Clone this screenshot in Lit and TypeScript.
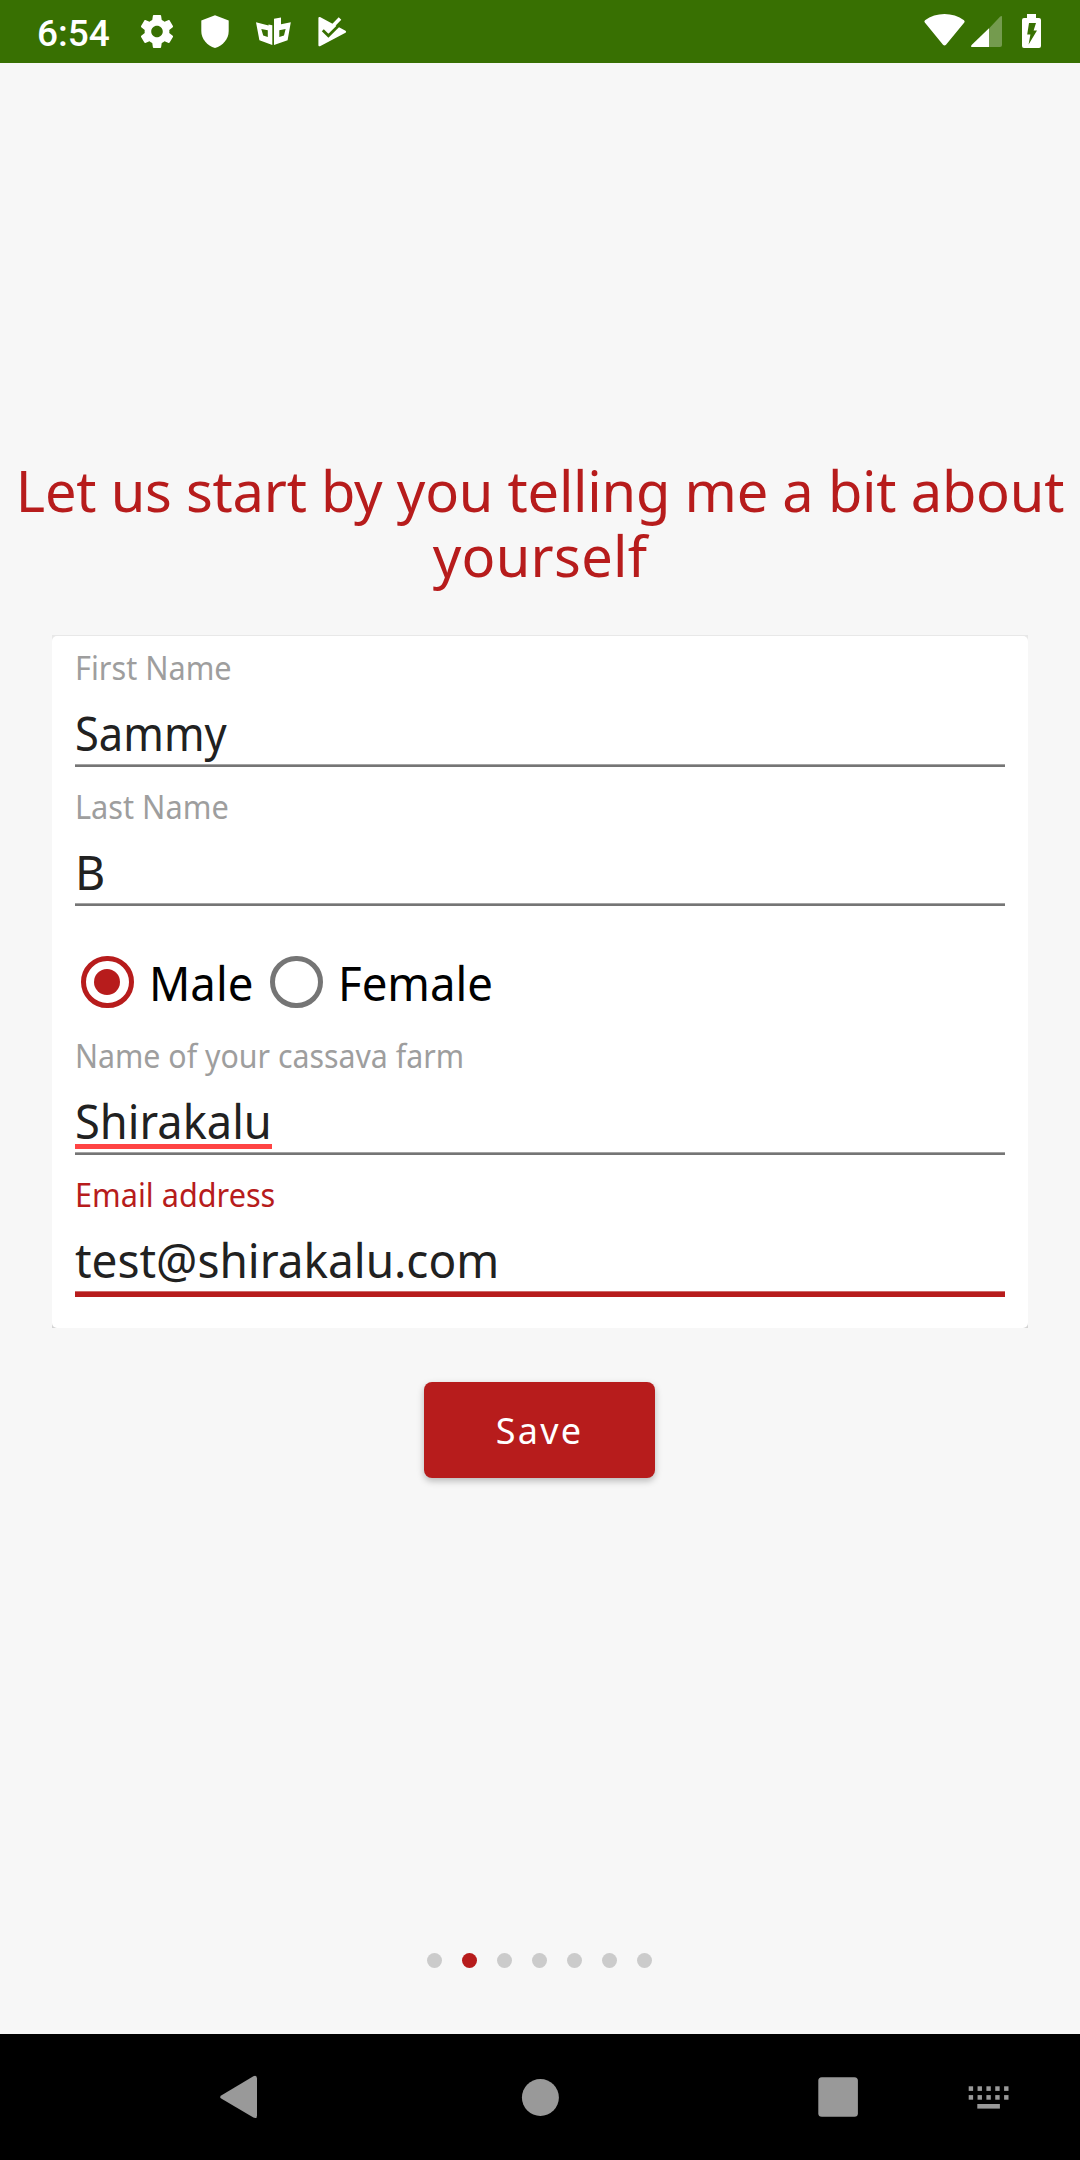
import { LitElement, html, css, svg } from "lit";
import { customElement, property } from "lit/decorators.js";
import { classMap } from "lit/directives/class-map.js";
import { styleMap } from "lit/directives/style-map.js";

const GEAR =
  "M19.43 12.98c.04-.32.07-.64.07-.98s-.03-.66-.07-.98l2.11-1.65c.19-.15.24-.42.12-.64l-2-3.46c-.12-.22-.39-.3-.61-.22l-2.49 1c-.52-.4-1.08-.73-1.69-.98l-.38-2.65C14.46 2.18 14.25 2 14 2h-4c-.25 0-.46.18-.49.42l-.38 2.65c-.61.25-1.17.59-1.69.98l-2.49-1c-.23-.09-.49 0-.61.22l-2 3.46c-.13.22-.07.49.12.64l2.11 1.65c-.04.32-.07.65-.07.98s.03.66.07.98l-2.11 1.65c-.19.15-.24.42-.12.64l2 3.46c.12.22.39.3.61.22l2.49-1c.52.4 1.08.73 1.69.98l.38 2.65c.03.24.24.42.49.42h4c.25 0 .46-.18.49-.42l.38-2.65c.61-.25 1.17-.59 1.69-.98l2.49 1c.23.09.49 0 .61-.22l2-3.46c.12-.22.07-.49-.12-.64l-2.11-1.65zM12 15.5c-1.93 0-3.5-1.57-3.5-3.5s1.57-3.5 3.5-3.5 3.5 1.57 3.5 3.5-1.57 3.5-3.5 3.5z";

@customElement("status-bar")
export class StatusBar extends LitElement {
  static styles = css`
    :host {
      display: flex;
      justify-content: space-between;
      height: 63px;
      background: #387002;
      color: #fff;
      font-family: Roboto, sans-serif;
    }
    .group {
      display: flex;
    }
    .start {
      padding-left: 37px;
    }
    .end {
      padding-right: 34px;
    }
    .time {
      width: 99px;
      font-size: 37px;
      font-weight: 500;
      line-height: 68px;
      white-space: nowrap;
    }
    svg {
      display: block;
      height: 63px;
      fill: #fff;
    }
  `;

  render() {
    return html`
      <div class="group start">
        <span class="time">6:54</span>
        <svg width="218" height="63" viewBox="136 0 218 63">
          <path transform="translate(137.2 11.7) scale(1.65)" d=${GEAR} />
          <path d="M215 15.2 228.7 20.5V31C228.7 39 223 45.5 215 48C207 45.5 201.3 39 201.3 31V20.5Z" />
          <path
            fill-rule="evenodd"
            d="M256 22.2 268.5 25.6V24.6L272.3 25.3V45L259.4 40.2ZM261.3 29 263.2 35.6 267.8 37V30.3ZM274 18.8 281 17.6V24.3L290.8 22.3 287.6 40.3 274 45ZM279.3 30.2V37L284 35.6 285.6 29Z"
          />
          <path
            d="M319.5 18 345 31.8 319.5 45.2Z"
            stroke="#fff"
            stroke-width="2.2"
            stroke-linejoin="round"
          />
          <path d="M322.8 30.2 328.4 35.8 343 21.2" fill="none" stroke="#387002" stroke-width="2.8" />
          <path d="M325.8 27.4 328.6 30.2 340 18.6" fill="none" stroke="#fff" stroke-width="3.6" />
        </svg>
      </div>
      <div class="group end">
        <svg width="126" height="63" viewBox="920 0 126 63">
          <path
            d="M925 20.2C936 12 953 12 964 20.2Q965.2 21.4 964.3 22.6L946 44.8Q944.5 46.4 943 44.8L924.8 22.6Q923.8 21.4 925 20.2Z"
          />
          <path
            fill-opacity=".3"
            d="M989 28.4 1000 16.8Q1002 15 1002 17V45Q1002 47 1000 47H989Z"
          />
          <path d="M989 28.2V47H972.6Q970 47 971.6 44.9Z" />
          <path
            fill-rule="evenodd"
            d="M1027 14H1036V18H1039Q1041 18 1041 20V46Q1041 48 1039 48H1024Q1022 48 1022 46V20Q1022 18 1024 18H1027ZM1029 23 1027.2 34.4H1030.4L1028.6 44.6 1037 30.6H1033.6L1036 23Z"
          />
        </svg>
      </div>
    `;
  }
}

@customElement("form-field")
export class FormField extends LitElement {
  @property() label = "";
  @property() value = "";
  /** Horizontal condensing of the label and value glyphs. */
  @property({ type: Number }) labelScale = 1;
  @property({ type: Number }) valueScale = 1;
  @property({ type: Boolean }) focused = false;
  @property({ type: Boolean }) misspelled = false;

  static styles = css`
    :host {
      display: block;
    }
    .label {
      height: 40px;
      line-height: 42px;
      font-size: 32px;
      color: #9e9e9e;
      white-space: nowrap;
      margin-bottom: 13px;
    }
    .value {
      position: relative;
      height: 64px;
      line-height: 66px;
      font-size: 46.5px;
      color: #212121;
      white-space: nowrap;
    }
    .text {
      display: inline-block;
      transform-origin: 0 50%;
    }
    .line {
      height: 3px;
      background: linear-gradient(#a3a3a3 1px, #757575 1px);
    }
    .focused .label {
      color: #b71c1c;
    }
    .focused .line {
      height: 6px;
      background: linear-gradient(#cf6a6a 1px, #b71c1c 1px);
    }
    .misspelled .value::after {
      content: "";
      position: absolute;
      left: 0;
      bottom: 3px;
      width: 197px;
      height: 5.5px;
      background: #ff4444;
    }
  `;

  render() {
    return html`
      <div class=${classMap({ focused: this.focused, misspelled: this.misspelled })}>
        <div class="label">
          <span class="text" style=${styleMap({ transform: `scaleX(${this.labelScale})` })}>${this.label}</span>
        </div>
        <div class="value">
          <span class="text" style=${styleMap({ transform: `scaleX(${this.valueScale})` })}>${this.value}</span>
        </div>
        <div class="line"></div>
      </div>
    `;
  }
}

@customElement("nav-bar")
export class NavBar extends LitElement {
  static styles = css`
    :host {
      display: block;
      height: 126px;
      background: #000;
    }
    svg {
      display: block;
      fill: #999;
    }
  `;

  render() {
    const keys = [0, 1].flatMap((row) =>
      [0, 1, 2, 3, 4].map(
        (col) => svg`<rect x=${968.7 + col * 8.85} y=${52.3 + row * 8.8} width="4.4" height="4.6" />`,
      ),
    );
    return html`
      <svg width="1080" height="126" viewBox="0 0 1080 126">
        <path d="M221.6 61.2 253.4 42.2Q257 40.8 257 44.6V81.4Q257 85.2 253.4 83.6L221.6 64.8Q218.6 63 221.6 61.2Z" />
        <circle cx="540.4" cy="63.5" r="18.5" />
        <rect x="818.3" y="43.2" width="39.6" height="39.6" rx="3.5" />
        ${keys}
        <rect x="977.3" y="70" width="22.6" height="4.6" />
      </svg>
    `;
  }
}

@customElement("app-root")
export class AppRoot extends LitElement {
  static styles = css`
    :host {
      display: flex;
      flex-direction: column;
      box-sizing: border-box;
      width: 1080px;
      height: 2160px;
      overflow: hidden;
      background: #f7f7f7;
      font-family: "Noto Sans", "Open Sans", sans-serif;
    }
    .content {
      flex: 1;
      display: flex;
      flex-direction: column;
      align-items: center;
      padding-top: 395px;
    }
    .title {
      margin: 0;
      font-size: 56px;
      font-weight: 400;
      line-height: 65px;
      color: #b71c1c;
      text-align: center;
      white-space: nowrap;
    }
    .first {
      letter-spacing: -0.22px;
    }
    .second {
      letter-spacing: 0.3px;
    }
    .elevation {
      width: 976px;
      margin-top: 47px;
      padding-top: 1px;
      background: linear-gradient(#e8e8e8, #d4d4d4);
    }
    .card {
      display: flex;
      flex-direction: column;
      box-sizing: border-box;
      height: 692px;
      padding: 11px 23px 0;
      border-radius: 5px;
      background: #fff;
    }
    .gap {
      margin-top: 19px;
    }
    .radios {
      display: flex;
      align-items: center;
      height: 64px;
      margin: 44px 0 21px;
      padding-left: 6px;
      font-size: 46.5px;
      line-height: 66px;
      color: #000;
    }
    .radio {
      display: flex;
      align-items: center;
      gap: 15.5px;
      width: 189px;
      height: 64px;
    }
    .ring {
      flex: none;
      display: grid;
      place-items: center;
      box-sizing: border-box;
      width: 52.5px;
      height: 52.5px;
      border: 5px solid #757575;
      border-radius: 50%;
    }
    .checked .ring {
      border-color: #b71c1c;
    }
    .checked .ring::after {
      content: "";
      width: 26px;
      height: 26px;
      border-radius: 50%;
      background: #b71c1c;
    }
    .name {
      height: 64px;
      transform: scaleX(0.98);
      transform-origin: 0 50%;
    }
    .save {
      width: 231px;
      height: 96px;
      margin-top: 54px;
      margin-right: 1px;
      padding: 0;
      border: 0;
      border-radius: 8px;
      background: #b71c1c;
      box-shadow: 0 3px 7px rgba(0, 0, 0, 0.26);
      color: #fff;
      font: 400 36px/98px "Noto Sans", "Open Sans", sans-serif;
      letter-spacing: 2.2px;
    }
    .dots {
      display: flex;
      gap: 20px;
      margin-top: auto;
      margin-right: 1px;
      margin-bottom: 66px;
    }
    .dot {
      width: 15px;
      height: 15px;
      border-radius: 50%;
      background: #cbcbcb;
    }
    .active {
      background: #b71c1c;
    }
  `;

  render() {
    return html`
      <status-bar></status-bar>
      <main class="content">
        <h1 class="title">
          <span class="first">Let us start by you telling me a bit about</span><br /><span class="second">yourself</span>
        </h1>
        <div class="elevation">
          <div class="card">
            <form-field label="First Name" value="Sammy" .labelScale=${0.958} .valueScale=${0.935}></form-field>
            <form-field class="gap" label="Last Name" value="B" .labelScale=${0.96}></form-field>
            <div class="radios">
              <div class="radio checked"><span class="ring"></span><span class="name">Male</span></div>
              <div class="radio"><span class="ring"></span><span class="name">Female</span></div>
            </div>
            <form-field
              label="Name of your cassava farm"
              value="Shirakalu"
              .labelScale=${0.947}
              .valueScale=${0.973}
              misspelled
            ></form-field>
            <form-field
              class="gap"
              label="Email address"
              value="test@shirakalu.com"
              .labelScale=${0.958}
              .valueScale=${0.988}
              focused
            ></form-field>
          </div>
        </div>
        <button class="save">Save</button>
        <div class="dots">
          ${[0, 1, 2, 3, 4, 5, 6].map((i) => html`<span class=${classMap({ dot: true, active: i === 1 })}></span>`)}
        </div>
      </main>
      <nav-bar></nav-bar>
    `;
  }
}
